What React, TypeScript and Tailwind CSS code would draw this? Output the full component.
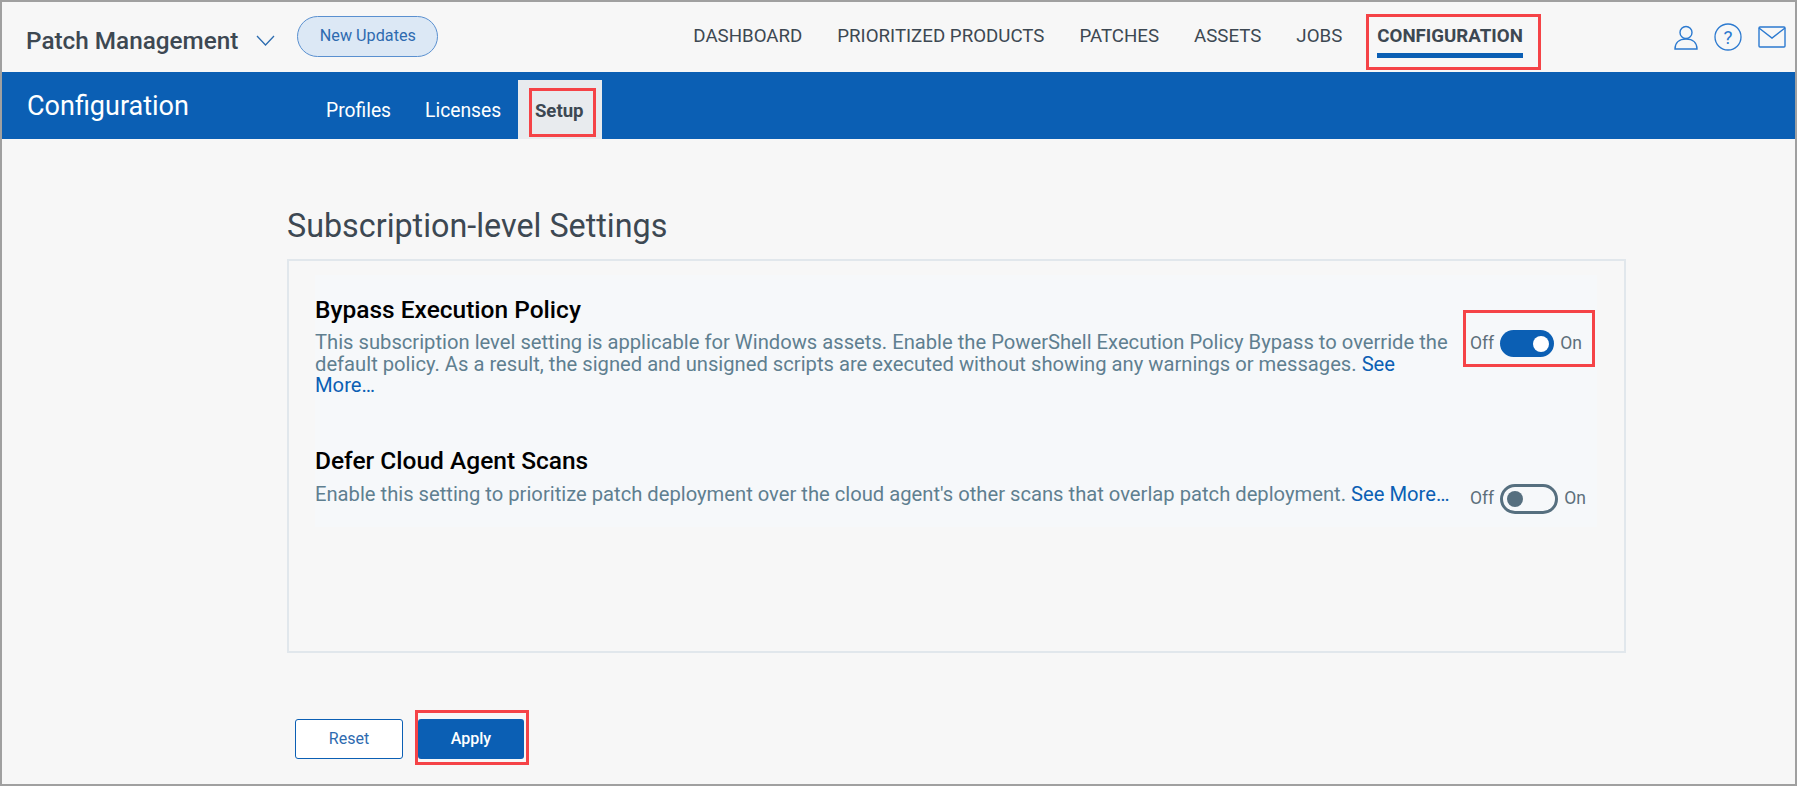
import React from "react";

function Annot({ cls }: { cls: string }) {
  return <span className={`absolute border-[3px] border-[#f54347] pointer-events-none ${cls}`} />;
}

function Row({ title, on, children, toggleCls, bodyCls, boxed }: { title: string; on: boolean; children: React.ReactNode; toggleCls: string; bodyCls: string; boxed?: boolean }) {
  return (
    <div className="flex items-start">
      <div className="w-[1139px] shrink-0">
        <div className="text-[24.5px] leading-[28px] font-medium text-black">{title}</div>
        <p className={`text-[20.2px] leading-[21.5px] text-[#5f7f90] ${bodyCls}`}>{children}</p>
      </div>
      <div className={`relative ml-[16px] flex items-center text-[17.5px] text-[#5d6f7a] ${toggleCls}`}>
        {boxed && <Annot cls="-left-[7px] -right-[13px] -top-[20px] -bottom-[10px]" />}
        <span>Off</span>
        {on ? (
          <span className="mx-[6px] flex h-[27px] w-[54px] items-center justify-end rounded-full bg-[#0b5fb4] pr-[5px]">
            <span className="h-[16px] w-[16px] rounded-full bg-white" />
          </span>
        ) : (
          <span className="mx-[6px] flex h-[30px] w-[58px] items-center rounded-full border-[3px] border-[#566f7f] pl-[4px]">
            <span className="h-[16px] w-[16px] rounded-full bg-[#566f7f]" />
          </span>
        )}
        <span>On</span>
      </div>
    </div>
  );
}

export default function App() {
  const link = "text-[#0b5fb4]";
  return (
    <div className="flex h-[786px] w-[1797px] flex-col overflow-hidden border-2 border-[#a0a0a0] bg-[#f7f7f7] font-['Roboto',sans-serif]">
      <header className="flex h-[70px] shrink-0 items-center">
        <span className="ml-[24px] mt-[8px] text-[24.3px] font-medium text-[#3d4852]">Patch Management</span>
        <svg className="ml-[18px] mt-[6px]" width="19" height="11" viewBox="0 0 19 11" fill="none" stroke="#2c6cb0" strokeWidth="1.3"><path d="M1 1l8.5 9L18 1" /></svg>
        <button className="ml-[22px] -mt-[1px] h-[41px] w-[141px] rounded-full border border-[#5a90d0] bg-[#dce8f5] text-[16.2px] text-[#2e6bb0]">New Updates</button>
        <nav className="ml-[255px] -mt-[3px] flex items-center gap-[35px] text-[18.7px] leading-[28px] text-[#3d4852]">
          <span>DASHBOARD</span>
          <span>PRIORITIZED PRODUCTS</span>
          <span>PATCHES</span>
          <span>ASSETS</span>
          <span>JOBS</span>
          <span className="relative font-bold">
            CONFIGURATION
            <span className="absolute inset-x-0 top-[31px] h-[5px] bg-[#0b5fb4]" />
            <Annot cls="-left-[11px] -right-[18px] -top-[8px] -bottom-[20px]" />
          </span>
        </nav>
        <div className="ml-auto mr-[9px] flex items-center gap-[16px] text-[#2c7ad0]">
          <svg width="24" height="25" viewBox="0 0 24 25" fill="none" stroke="currentColor" strokeWidth="1.4">
            <circle cx="12" cy="7.5" r="6" />
            <path d="M1 24c0-6 4-10 11-10s11 4 11 10z" />
          </svg>
          <svg width="28" height="28" viewBox="0 0 28 28" fill="none" stroke="currentColor" strokeWidth="1.3">
            <circle cx="14" cy="14" r="13" />
            <text x="14" y="20.5" textAnchor="middle" fontSize="19" fontFamily="Roboto" fill="currentColor" stroke="none">?</text>
          </svg>
          <svg width="28" height="22" viewBox="0 0 28 22" fill="none" stroke="currentColor" strokeWidth="1.4">
            <rect x="1" y="1" width="26" height="20" rx="1" />
            <path d="M1 2l13 10L27 2" />
          </svg>
        </div>
      </header>
      <div className="flex h-[67px] shrink-0 items-end bg-[#0b5fb4] text-white">
        <span className="mb-[17px] ml-[25px] w-[299px] text-[27px] leading-[32px]">Configuration</span>
        <span className="mb-[16px] text-[19.3px] leading-[24px]">Profiles</span>
        <span className="mb-[16px] ml-[34px] text-[19.3px] leading-[24px]">Licenses</span>
        <span className="relative ml-[17px] flex h-[59px] w-[84px] items-center justify-center bg-[#e8ebee] pr-[2px] pt-[4px] text-[18.6px] font-bold text-[#3d4852]">
          Setup
          <Annot cls="left-[11px] right-[6px] top-[8px] bottom-[2px]" />
        </span>
      </div>
      <main className="flex flex-1 flex-col pl-[285px]">
        <h1 className="mt-[68px] text-[32.3px] leading-[38px] text-[#3d4852]">Subscription-level Settings</h1>
        <section className="mt-[14px] h-[394px] w-[1339px] border-2 border-[#e1e7ec] px-[26px] pt-[14px]">
          <div className="h-[252px] w-[1282px] bg-[#f6f8fa] pt-[21px]">
            <Row title="Bypass Execution Policy" on toggleCls="mt-[34px]" bodyCls="mt-[8px]" boxed>
              This subscription level setting is applicable for Windows assets. Enable the PowerShell Execution Policy Bypass to override the default policy. As a result, the signed and unsigned scripts are executed without showing any warnings or messages. <a className={link}>See More…</a>
            </Row>
            <div className="h-[50px]" />
            <Row title="Defer Cloud Agent Scans" on={false} toggleCls="mt-[37px]" bodyCls="mt-[9px]">
              Enable this setting to prioritize patch deployment over the cloud agent's other scans that overlap patch deployment. <a className={link}>See More…</a>
            </Row>
          </div>
        </section>
        <div className="mt-[66px] ml-[8px] flex items-center gap-[15px]">
          <button className="h-[40px] w-[108px] rounded-[3px] border border-[#0b5fb4] bg-white text-[16px] text-[#2e6bb0]">Reset</button>
          <button className="relative h-[40px] w-[106px] rounded-[3px] bg-[#0b5fb4] text-[16px] font-medium text-white">
            Apply
            <Annot cls="-left-[3px] -right-[5px] -top-[9px] -bottom-[6px]" />
          </button>
        </div>
      </main>
    </div>
  );
}
